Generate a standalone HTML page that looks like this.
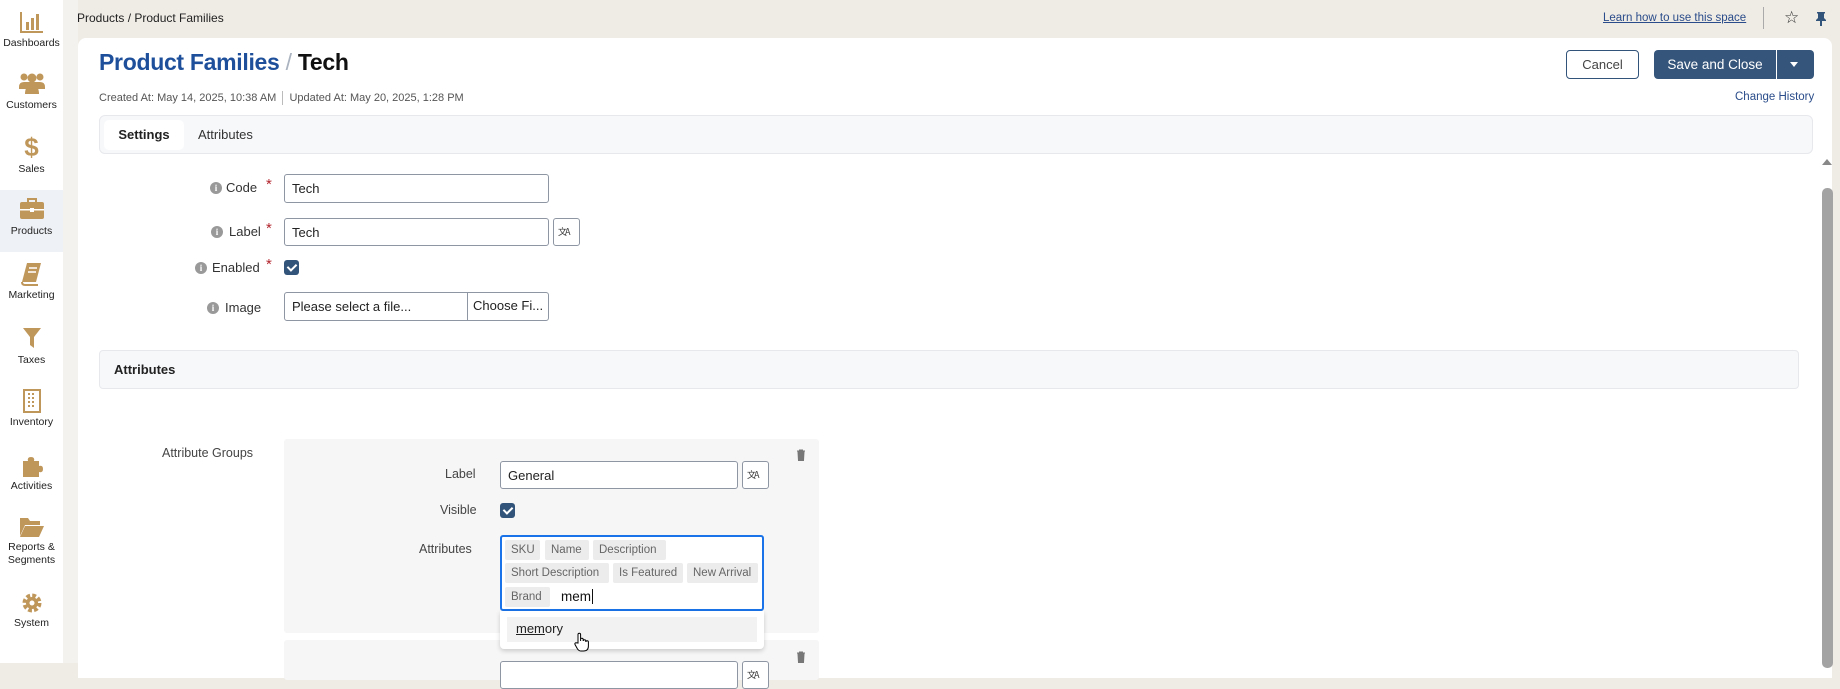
<!DOCTYPE html>
<html><head><meta charset="utf-8"><style>
*{box-sizing:border-box;margin:0;padding:0}
body{width:1840px;height:663px;overflow:hidden;background:#efebe5;font-family:"Liberation Sans",sans-serif;color:#222;position:relative}
.a{position:absolute}
.sb{left:0;top:0;width:63px;height:663px;background:#fff}
.si{position:absolute;left:0;width:63px;text-align:center;font-size:10.5px;color:#222}
.ic{position:absolute;left:50%;transform:translateX(-50%)}
.card{left:78px;top:38px;width:1754px;height:640px;background:#fff;border-radius:8px 8px 0 0}
.inp{position:absolute;background:#fff;border:1px solid #8e95a3;border-radius:3px;font-size:13px;padding-left:7px;display:flex;align-items:center}
.lbl{position:absolute;font-size:13px;color:#333;text-align:right}
.star{color:#b3262e;font-size:15px;position:absolute}
.info{position:absolute;width:12px;height:12px;border-radius:50%;background:#999;color:#fff;font-size:9px;font-weight:bold;text-align:center;line-height:12px;font-family:"Liberation Serif",serif}
.cb{position:absolute;width:15px;height:15px;background:#33547a;border-radius:3px}
.cb:after{content:"";position:absolute;left:5px;top:2px;width:4px;height:7px;border:solid #fff;border-width:0 2px 2px 0;transform:rotate(45deg)}
.tr{position:absolute;background:#fff;border:1px solid #8e95a3;border-radius:3px}
.tr:after{content:"文A";position:absolute;left:4px;top:6px;font-size:9px;color:#333;font-family:"Noto Sans CJK SC",sans-serif;letter-spacing:-2px}
.tag{position:absolute;background:#ececec;color:#666;font-size:11.5px;height:20px;line-height:20px;padding:0 6px;border-radius:2px;white-space:nowrap;overflow:hidden}
</style></head><body>
<div class="a sb"></div>
<div class="a" style="left:63px;top:0;width:15px;height:663px;background:#f4f2ef"></div>
<div class="a" style="left:0;top:190px;width:63px;height:62px;background:#eef1f6"></div>

<div class="si" style="top:10px"><svg class="ic" style="top:0" width="26" height="24" viewBox="0 0 26 24"><path d="M2 2v20h22" stroke="#c0975b" stroke-width="2" fill="none"/><rect x="7" y="12" width="3" height="8" fill="#c0975b"/><rect x="12" y="8" width="3" height="12" fill="#c0975b"/><rect x="17" y="4" width="3" height="16" fill="#c0975b"/></svg><div style="position:absolute;top:27px;width:63px">Dashboards</div></div>
<div class="si" style="top:72px"><svg class="ic" style="top:0" width="28" height="24" viewBox="0 0 28 24"><circle cx="6" cy="5" r="3.5" fill="#c0975b"/><circle cx="22" cy="5" r="3.5" fill="#c0975b"/><circle cx="14" cy="6" r="4.5" fill="#c0975b"/><path d="M1 15q0-5 5-5h16q5 0 5 5v2H1z" fill="#c0975b"/><path d="M7 22q0-9 7-9t7 9z" fill="#c0975b"/></svg><div style="position:absolute;top:27px;width:63px">Customers</div></div>
<div class="si" style="top:134px"><div class="ic" style="top:-2px;font-size:26px;font-weight:bold;color:#c0975b">$</div><div style="position:absolute;top:29px;width:63px">Sales</div></div>
<div class="si" style="top:198px"><svg class="ic" style="top:0" width="26" height="22" viewBox="0 0 26 22"><path d="M9 4V1h8v3" stroke="#c0975b" stroke-width="2" fill="none"/><rect x="1" y="4" width="24" height="17" rx="2" fill="#c0975b"/><rect x="1" y="11" width="24" height="1.5" fill="#fff"/><rect x="11" y="10" width="4" height="4" fill="#fff"/></svg><div style="position:absolute;top:27px;width:63px">Products</div></div>
<div class="si" style="top:262px"><svg class="ic" style="top:0" width="24" height="24" viewBox="0 0 24 24"><path d="M7 1h14l-5 19H2z" fill="#c0975b"/><path d="M2 20q0 3 3 3h13" stroke="#c0975b" stroke-width="2" fill="none"/><path d="M9 6h8M8 10h8" stroke="#fff" stroke-width="1.5"/></svg><div style="position:absolute;top:27px;width:63px">Marketing</div></div>
<div class="si" style="top:327px"><svg class="ic" style="top:0" width="20" height="22" viewBox="0 0 20 22"><path d="M1 1h18l-7 9v11l-4-3v-8z" fill="#c0975b"/></svg><div style="position:absolute;top:27px;width:63px">Taxes</div></div>
<div class="si" style="top:389px"><svg class="ic" style="top:0" width="18" height="24" viewBox="0 0 18 24"><rect x="1" y="1" width="16" height="22" fill="none" stroke="#c0975b" stroke-width="2"/><path d="M5 5h2M9 5h2M5 9h2M9 9h2M5 13h2M9 13h2M5 17h2M9 17h2" stroke="#c0975b" stroke-width="2"/></svg><div style="position:absolute;top:27px;width:63px">Inventory</div></div>
<div class="si" style="top:453px"><svg class="ic" style="top:0" width="22" height="24" viewBox="0 0 22 24"><path d="M2 8h5q-1-4 3-4t3 4h5v5q4-1 4 3t-4 3v5H2z" fill="#c0975b"/></svg><div style="position:absolute;top:27px;width:63px">Activities</div></div>
<div class="si" style="top:516px"><svg class="ic" style="top:0" width="26" height="22" viewBox="0 0 26 22"><path d="M1 2h8l2 3h10v4H6L1 20z" fill="#c0975b"/><path d="M6 10h19l-5 11H1z" fill="#c0975b"/></svg><div style="position:absolute;top:25px;width:63px;line-height:13px">Reports &amp;<br>Segments</div></div>
<div class="si" style="top:592px"><svg class="ic" style="top:0" width="22" height="22" viewBox="0 0 22 22"><circle cx="11" cy="11" r="7" fill="none" stroke="#c0975b" stroke-width="5" stroke-dasharray="3.5 2"/><circle cx="11" cy="11" r="6" fill="#c0975b"/><circle cx="11" cy="11" r="2.5" fill="#fff"/></svg><div style="position:absolute;top:25px;width:63px">System</div></div>

<div class="a" style="left:77px;top:11px;font-size:12px;color:#222">Products / Product Families</div>
<div class="a" style="left:1603px;top:12px;font-size:11.5px;color:#2a4c8a;text-decoration:underline">Learn how to use this space</div>
<div class="a" style="left:1763px;top:7px;width:1px;height:22px;background:#aaa"></div>
<div class="a" style="left:1784px;top:8px;font-size:17px;color:#333">☆</div>
<svg class="a" style="left:1815px;top:11px" width="12" height="15" viewBox="0 0 12 15"><path d="M2 1h8v1l-1 1v4l2 2v1H7v5H5v-5H1V9l2-2V3L2 2z" fill="#33547a"/></svg>

<div class="a card"></div>
<div class="a" style="left:99px;top:49px;font-size:23px;font-weight:bold;color:#1d4f9a;letter-spacing:-0.3px">Product Families <span style="color:#aab3bf;font-weight:normal">/</span> <span style="color:#111">Tech</span></div>
<div class="a" style="left:99px;top:91px;font-size:11px;color:#555">Created At: May 14, 2025, 10:38 AM <span style="display:inline-block;width:1px;height:14px;background:#bbb;vertical-align:middle;margin:0 3px"></span> Updated At: May 20, 2025, 1:28 PM</div>
<div class="a" style="left:1566px;top:50px;width:73px;height:29px;border:1px solid #33547a;border-radius:4px;font-size:13px;color:#444;text-align:center;line-height:27px">Cancel</div>
<div class="a" style="left:1654px;top:50px;width:160px;height:29px;background:#35557a;border-radius:4px"></div>
<div class="a" style="left:1654px;top:50px;width:122px;height:29px;color:#fff;font-size:13.5px;text-align:center;line-height:29px">Save and Close</div>
<div class="a" style="left:1776px;top:50px;width:1px;height:29px;background:#fff"></div>
<div class="a" style="left:1790px;top:62px;border:4px solid transparent;border-top:5px solid #fff"></div>
<div class="a" style="left:1735px;top:91px;font-size:11.5px;color:#2a4c8a">Change History</div>

<div class="a" style="left:99px;top:115px;width:1714px;height:39px;background:#f7f8fa;border:1px solid #e6e8ec;border-radius:6px"></div>
<div class="a" style="left:104px;top:120px;width:80px;height:30px;background:#fff;border-radius:5px;font-size:13px;font-weight:bold;color:#222;text-align:center;line-height:30px">Settings</div>
<div class="a" style="left:198px;top:127px;font-size:13px;color:#333">Attributes</div>

<div class="a" style="left:1822px;top:159px;border:5px solid transparent;border-bottom:6px solid #888;border-top:0"></div>
<div class="a" style="left:1822px;top:188px;width:11px;height:480px;background:#a3a3a3;border-radius:5px"></div>

<div class="info" style="left:210px;top:182px">i</div><div class="lbl" style="left:226px;top:180px">Code</div><div class="star" style="left:266px;top:176px">*</div>
<div class="inp" style="left:284px;top:174px;width:265px;height:29px">Tech</div>
<div class="info" style="left:211px;top:226px">i</div><div class="lbl" style="left:229px;top:224px">Label</div><div class="star" style="left:266px;top:220px">*</div>
<div class="inp" style="left:284px;top:218px;width:265px;height:28px">Tech</div>
<div class="tr" style="left:553px;top:218px;width:27px;height:28px"></div>
<div class="info" style="left:195px;top:262px">i</div><div class="lbl" style="left:212px;top:260px">Enabled</div><div class="star" style="left:266px;top:256px">*</div>
<div class="cb" style="left:284px;top:260px"></div>
<div class="info" style="left:207px;top:302px">i</div><div class="lbl" style="left:225px;top:300px">Image</div>
<div class="inp" style="left:284px;top:292px;width:265px;height:29px">Please select a file...</div>
<div class="a" style="left:467px;top:293px;width:1px;height:27px;background:#8e95a3"></div>
<div class="a" style="left:473px;top:298px;font-size:13px">Choose Fi...</div>

<div class="a" style="left:99px;top:350px;width:1700px;height:39px;background:#f7f8fa;border:1px solid #e6e8ec;border-radius:4px"></div>
<div class="a" style="left:114px;top:362px;font-size:13px;font-weight:bold">Attributes</div>

<div class="a" style="left:162px;top:446px;font-size:12.5px;color:#444">Attribute Groups</div>
<div class="a" style="left:284px;top:439px;width:535px;height:194px;background:#f6f6f6;border-radius:3px"></div>
<div class="a" style="left:284px;top:640px;width:535px;height:40px;background:#f6f6f6;border-radius:3px"></div>
<div class="inp" style="left:500px;top:661px;width:238px;height:28px"></div>
<div class="tr" style="left:742px;top:661px;width:27px;height:28px"></div>
<svg class="a" style="left:796px;top:449px" width="10" height="12" viewBox="0 0 10 12"><path d="M1 2h8M3.5 2V1h3v1M2 3h6l-.5 8.5h-5z" stroke="#777" fill="#777" stroke-width="1"/></svg>
<svg class="a" style="left:796px;top:651px" width="10" height="12" viewBox="0 0 10 12"><path d="M1 2h8M3.5 2V1h3v1M2 3h6l-.5 8.5h-5z" stroke="#777" fill="#777" stroke-width="1"/></svg>
<div class="a" style="left:445px;top:467px;font-size:12.5px;color:#444">Label</div>
<div class="inp" style="left:500px;top:461px;width:238px;height:28px">General</div>
<div class="tr" style="left:742px;top:461px;width:27px;height:28px"></div>
<div class="a" style="left:440px;top:503px;font-size:12.5px;color:#444">Visible</div>
<div class="cb" style="left:500px;top:503px"></div>
<div class="a" style="left:419px;top:542px;font-size:12.5px;color:#444">Attributes</div>
<div class="a" style="left:500px;top:535px;width:264px;height:76px;background:#fff;border:2px solid #1a73e8;border-radius:3px"></div>
<div class="tag" style="left:505px;top:540px;width:35px">SKU</div>
<div class="tag" style="left:545px;top:540px;width:44px">Name</div>
<div class="tag" style="left:593px;top:540px;width:73px">Description</div>
<div class="tag" style="left:505px;top:563px;width:104px">Short Description</div>
<div class="tag" style="left:613px;top:563px;width:70px">Is Featured</div>
<div class="tag" style="left:687px;top:563px;width:71px">New Arrival</div>
<div class="tag" style="left:505px;top:587px;width:45px">Brand</div>
<div class="a" style="left:561px;top:589px;font-size:13.5px;color:#111">mem<span style="border-left:1px solid #111;margin-left:1px"></span></div>
<div class="a" style="left:500px;top:611px;width:264px;height:38px;background:#fff;border-radius:0 0 4px 4px;box-shadow:0 2px 5px rgba(0,0,0,.18)"></div>
<div class="a" style="left:507px;top:617px;width:250px;height:25px;background:#f2f2f2"></div>
<div class="a" style="left:516px;top:621px;font-size:13px;color:#222"><u>mem</u>ory</div>
<svg class="a" style="left:574px;top:632px" width="16" height="20" viewBox="0 0 16 20"><path d="M4 11V2.5a1.3 1.3 0 0 1 2.6 0V9V7.5a1.3 1.3 0 0 1 2.6 0V9a1.3 1.3 0 0 1 2.6 0v1a1.3 1.3 0 0 1 2.6 0v4q0 5-5 5H7q-2 0-3.5-2L1 12.5q-.5-1.5 1-1.8z" fill="#fff" stroke="#000" stroke-width="1"/></svg>
</body></html>
